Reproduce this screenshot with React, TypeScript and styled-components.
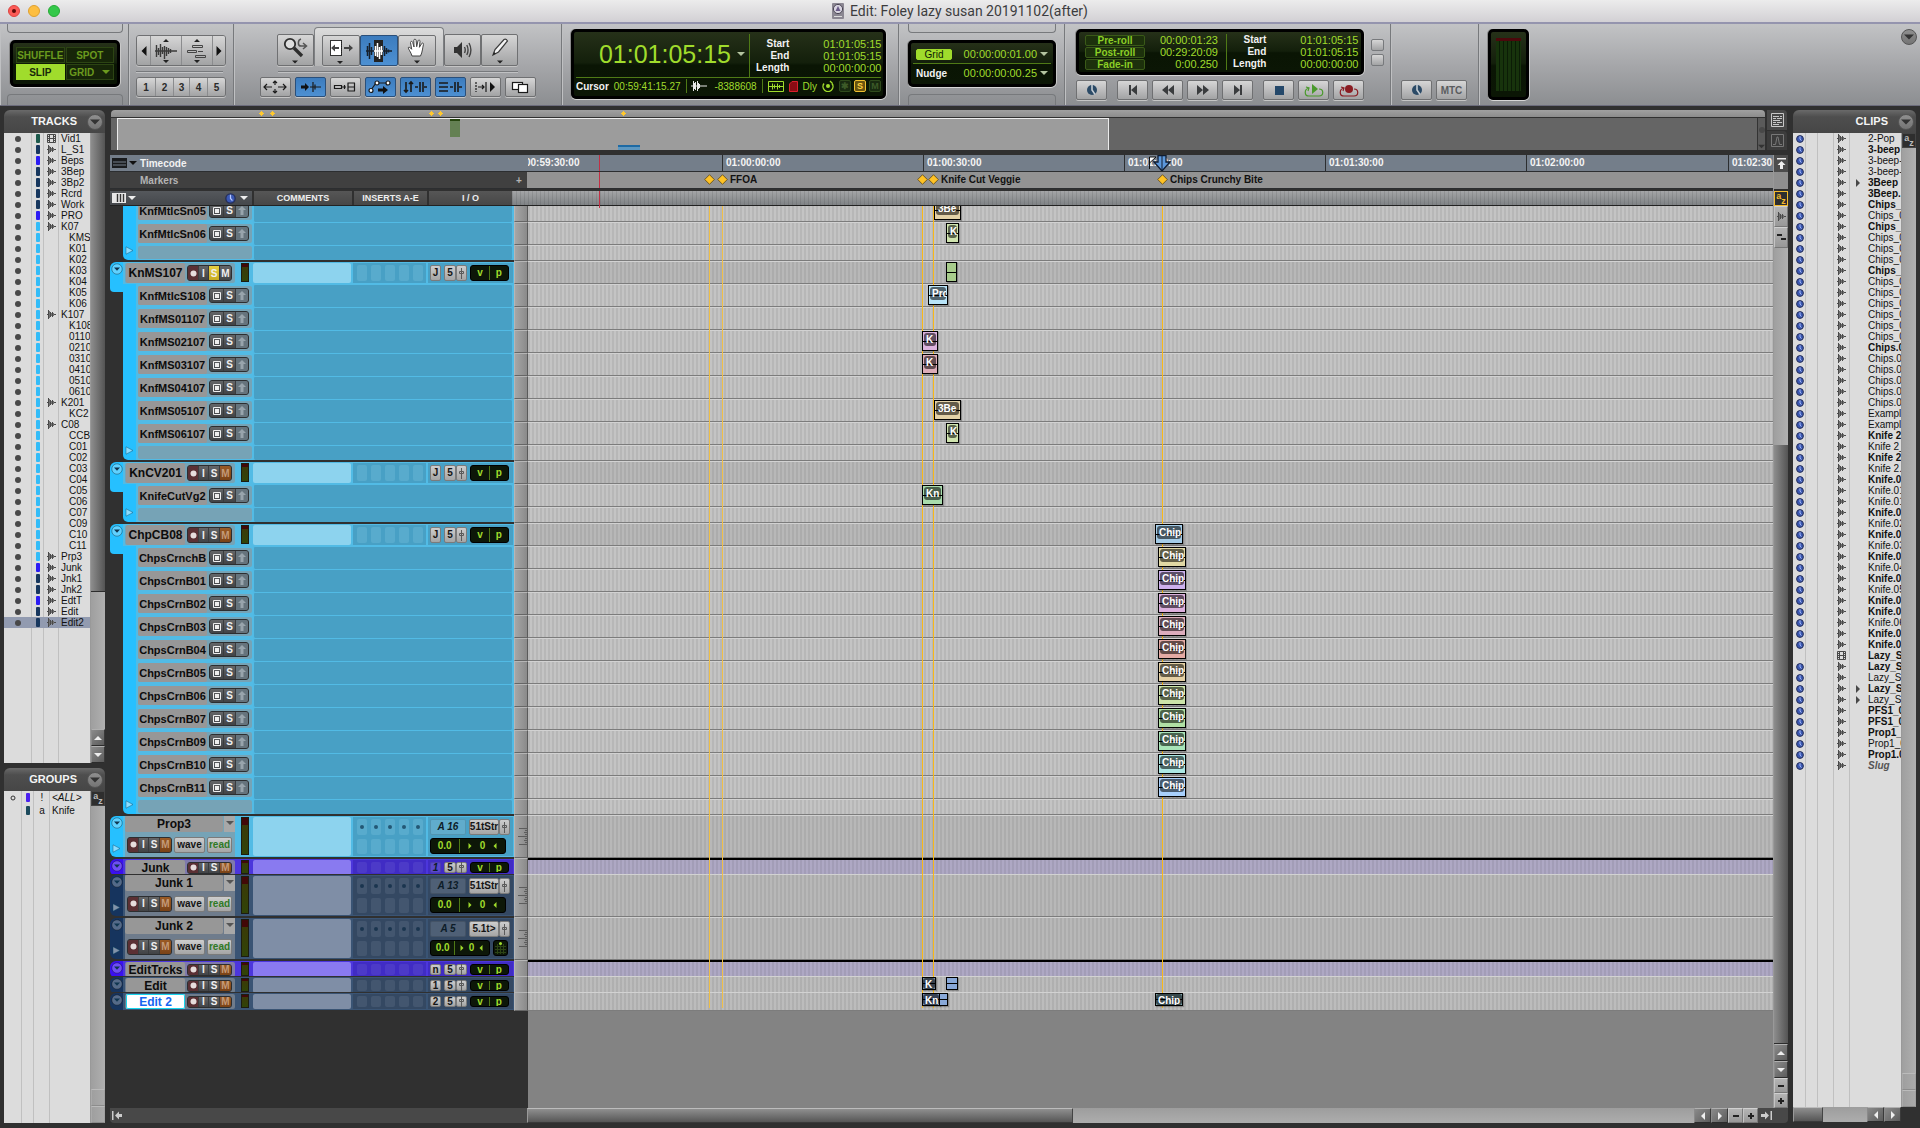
import React from "react";
import styled, { createGlobalStyle, css } from "styled-components";

const SANS = `"Liberation Sans", Arial, Helvetica, sans-serif`;
const LIME = "#a0dc2c";

const GlobalStyle = createGlobalStyle`
  *, *::before, *::after { box-sizing: border-box; }
  body { margin: 0; background: #303030; font-family: ${SANS}; font-size: 10px; line-height: 11px; color: #111; }
  button, input { font: inherit; color: inherit; margin: 0; padding: 0; border: 0; background: none; min-width: 0; }
  button { display: flex; align-items: center; justify-content: center; cursor: pointer; }
  ul { list-style: none; margin: 0; padding: 0; }
  h1, h2 { margin: 0; font: inherit; }
  svg { display: block; flex: none; }
`;

/* ---------- window ---------- */

const Window = styled.div`
  display: flex;
  flex-direction: column;
  min-height: 100vh;
  background: #303030;
`;

const TitleBar = styled.header`
  display: grid;
  grid-template-columns: 1fr auto 1fr;
  align-items: center;
  height: 24px;
  padding: 0 8px;
  background: linear-gradient(#ececec, #d2d0d4);
  border-bottom: 2px solid #9494ae;
`;

const Lights = styled.div`
  display: flex;
  gap: 8px;
`;

const Light = styled.button<{ $c: string; $b: string }>`
  width: 12px;
  height: 12px;
  border-radius: 50%;
  background: ${(p) => p.$c};
  border: 1px solid ${(p) => p.$b};
`;

const Title = styled.h1`
  display: flex;
  align-items: center;
  gap: 6px;
  font-family: Roboto, sans-serif;
  font-size: 14px;
  line-height: 20px;
  color: #3c3c3e;
  white-space: nowrap;
`;

/* ---------- toolbar ---------- */

const Toolbar = styled.div`
  display: flex;
  height: 82px;
  background: linear-gradient(#c2c3c5, #a6a7aa 50%, #8c8e91);
  border-bottom: 1px solid #6c6c7c;
  overflow: hidden;
`;

const Cluster = styled.section<{ $w?: number; $pad?: string; $align?: string; $gap?: number; $spread?: boolean }>`
  display: flex;
  flex-direction: column;
  flex: ${(p) => (p.$w ? `0 0 ${p.$w}px` : "1 1 0")};
  padding: ${(p) => p.$pad ?? "0"};
  align-items: ${(p) => p.$align ?? "flex-start"};
  justify-content: ${(p) => (p.$spread ? "space-between" : "flex-start")};
  gap: ${(p) => p.$gap ?? 5}px;
  border-right: ${(p) => (p.$w ? "1px solid #77797c" : "0")};
  box-shadow: inset 1px 0 #bfc0c2;
`;

const Notch = styled.div<{ $bottom?: boolean }>`
  align-self: stretch;
  height: ${(p) => (p.$bottom ? 11 : 9)}px;
  border: 1px solid #77797c;
  ${(p) =>
    p.$bottom
      ? css`border-bottom: 0; border-radius: 4px 4px 0 0;`
      : css`border-top: 0; border-radius: 0 0 4px 4px;`}
`;

const Screen = styled.div<{ $w: number; $h: number }>`
  display: flex;
  flex-direction: column;
  width: ${(p) => p.$w}px;
  height: ${(p) => p.$h}px;
  padding: 2px;
  border: 3px solid #000;
  border-radius: 5px;
  box-shadow: 0 1px 0 #d6d6d6, 1px 0 0 #c8c8c8, -1px 0 0 #8a8a8a;
  background: linear-gradient(#263119, #131f0b 48%, #0a1504 52%, #0b1605);
  color: ${LIME};
  white-space: nowrap;
`;

const ModeGrid = styled.div`
  display: grid;
  grid-template-columns: 1fr 1fr;
  gap: 1px;
  flex: 1;
  padding: 2px 1px;
`;

const Mode = styled.button<{ $on?: boolean }>`
  gap: 8px;
  font-size: 10px;
  font-weight: 700;
  color: ${(p) => (p.$on ? "#18280a" : "#6b9a1e")};
  background: ${(p) => (p.$on ? LIME : "#172609")};
  border: 1px solid ${(p) => (p.$on ? LIME : "#2c4413")};
`;

const Row = styled.div<{ $gap?: number; $align?: string }>`
  display: flex;
  align-items: ${(p) => p.$align ?? "center"};
  gap: ${(p) => p.$gap ?? 0}px;
`;

const face = css`
  background: linear-gradient(#d6d6d6, #bcbcbd 50%, #a2a3a4);
`;

const Strip = styled.div`
  display: flex;
  border: 1px solid #6f7072;
  border-radius: 3px;
  overflow: hidden;
  box-shadow: 0 1px #c5c5c5;
`;

const Cell = styled.button<{ $w: number; $h: number }>`
  width: ${(p) => p.$w}px;
  height: ${(p) => p.$h}px;
  ${face}
  font-weight: 700;
  color: #2a2a2a;
  & + & { border-left: 1px solid #8b8c8e; }
`;

const Tool = styled.button<{ $w: number; $h: number; $on?: boolean }>`
  width: ${(p) => p.$w}px;
  height: ${(p) => p.$h}px;
  ${face}
  ${(p) => p.$on && css`background: linear-gradient(#3c7cbe, #4d90d2);`}
  border: 1px solid ${(p) => (p.$on ? "#2a4f7a" : "#6f7072")};
  border-radius: 2px;
  box-shadow: 0 1px #c5c5c5;
  font-weight: 700;
  color: #5a5c5e;
`;

const SmartFrame = styled.div`
  display: flex;
  padding: 7px 7px 0;
  border: 1px solid #7d7f82;
  border-bottom: 0;
  border-radius: 4px 4px 0 0;
  background: linear-gradient(#dcdcdc, #b4b5b6);
`;

const Groove = styled.div<{ $w: number }>`
  width: ${(p) => p.$w}px;
  height: 1px;
  background: #77797c;
  box-shadow: 0 1px #c0c1c3;
`;

const CounterTop = styled.div`
  display: grid;
  grid-template-columns: 1fr 132px;
  height: 44px;
  border-bottom: 1px solid #4f7a16;
`;

const MainCounter = styled.div`
  display: flex;
  align-items: center;
  justify-content: flex-end;
  gap: 6px;
  padding-right: 4px;
  margin-bottom: 4px;
  font-size: 25px;
  line-height: 28px;
`;

const Pairs = styled.dl`
  display: grid;
  grid-template-columns: 1fr auto;
  align-content: center;
  column-gap: 34px;
  margin: 0;
  padding: 0 5px 0 6px;
  line-height: 12px;
  border-left: 1px solid #4f7a16;
  dt { font-weight: 700; color: #f2f2f2; text-align: right; }
  dd { margin: 0; font-size: 11px; text-align: right; }
`;

const CursorLine = styled.div`
  display: flex;
  align-items: center;
  gap: 5px;
  flex: 1;
  font-size: 10px;
  b { color: #f2f2f2; }
`;

const Value = styled.span<{ $w: number }>`
  width: ${(p) => p.$w}px;
  text-align: right;
`;

const Bar = styled.i`
  width: 1px;
  height: 14px;
  background: #4f7a16;
`;

const Status = styled.button<{ $on?: boolean }>`
  width: 12px;
  height: 12px;
  border: 1px solid ${(p) => (p.$on ? "#f0c030" : "#2f4a1c")};
  border-radius: 2px;
  background: ${(p) => (p.$on ? "#6a5410" : "#182a10")};
  color: ${(p) => (p.$on ? "#ffd040" : "#3c5a28")};
  font-size: 9px;
  line-height: 10px;
  font-weight: 700;
`;

const GridRow = styled.div`
  display: flex;
  align-items: center;
  gap: 3px;
  flex: 1;
  padding: 0 3px;
  font-size: 11px;
  & + & { border-top: 1px solid #4f7a16; }
  b { font-size: 10px; color: #f2f2f2; flex: 1; }
`;

const Badge = styled.button<{ $w: number; $on?: boolean }>`
  width: ${(p) => p.$w}px;
  height: 11px;
  margin-right: auto;
  font-size: 10px;
  line-height: 9px;
  font-weight: ${(p) => (p.$on ? 400 : 700)};
  border: 1px solid ${(p) => (p.$on ? LIME : "#3a5a18")};
  border-radius: 2px;
  background: ${(p) => (p.$on ? LIME : "#1d310c")};
  color: ${(p) => (p.$on ? "#0c1804" : "#8ccf26")};
`;

const RollGrid = styled.div`
  display: grid;
  grid-template-columns: 141px 1fr;
  flex: 1;
  padding-left: 4px;
`;

const Rolls = styled.div`
  display: flex;
  flex-direction: column;
  justify-content: center;
  gap: 1px;
  padding-right: 8px;
  font-size: 11px;
`;

const Minis = styled.div`
  display: flex;
  flex-direction: column;
  gap: 3px;
`;

const Mini = styled.button`
  width: 13px;
  height: 12px;
  ${face}
  border: 1px solid #77797c;
  border-radius: 2px;
`;

const MeterFill = styled.div`
  flex: 1;
  margin: 4px 3px;
  border-top: 3px solid #4c080c;
  background: repeating-linear-gradient(90deg, #17330c 0 3px, #0b1c06 3px 4px);
`;

const TopRow = styled.div`
  display: flex;
  align-items: flex-start;
  justify-content: space-between;
  align-self: stretch;
`;

const RoundButton = styled.button`
  width: 16px;
  height: 16px;
  flex: none;
  border: 1px solid #555;
  border-radius: 50%;
  background: linear-gradient(#8f8f8f, #747474);
`;

/* ---------- body ---------- */

const Body = styled.main`
  flex: 1;
  display: grid;
  grid-template-columns: 101px minmax(0, 1fr) 123px;
  gap: 5px;
  padding: 4px 4px 5px;
`;

const Side = styled.aside`
  display: flex;
  flex-direction: column;
  gap: 5px;
  min-width: 0;
`;

const Panel = styled.section<{ $grow?: number; $basis?: number }>`
  display: flex;
  flex-direction: column;
  flex: ${(p) => p.$grow ?? 1} 1 ${(p) => p.$basis ?? 0}px;
  min-height: 0;
`;

const PanelHead = styled.div`
  display: flex;
  align-items: center;
  justify-content: flex-end;
  gap: 10px;
  height: 23px;
  padding-right: 2px;
  border-radius: 6px 6px 0 0;
  background: linear-gradient(#6a6a6a, #4e4e4e 30%, #464646);
  h2 { flex: 1; text-align: right; font-size: 11px; font-weight: 700; color: #f4f4f4; }
`;

const PanelBody = styled.div`
  display: grid;
  grid-template-columns: minmax(0, 1fr) 15px;
  flex: 1;
  min-height: 0;
`;

const rules = (xs: number[]) =>
  xs.map((x) => `linear-gradient(#c0c0c0, #c0c0c0) ${x}px 0 / 1px 100% no-repeat`).join(", ");

const List = styled.ul<{ $rules: number[] }>`
  min-width: 0;
  overflow: hidden;
  background: ${(p) => rules(p.$rules)}, #dcdcdc;
`;

const TrackItem = styled.li<{ $sel?: boolean }>`
  display: grid;
  grid-template-columns: 28px 12px 15px 1fr;
  align-items: center;
  justify-items: center;
  height: 11px;
  background: ${(p) => (p.$sel ? "#929bb0" : "none")};
`;

const Dot = styled.i`
  width: 6px;
  height: 6px;
  border-radius: 50%;
  background: #484848;
`;

const Pill = styled.i<{ $c: string }>`
  width: 4px;
  height: 9px;
  border-radius: 1px;
  background: ${(p) => p.$c};
`;

const ItemName = styled.span<{ $indent?: boolean; $bold?: boolean; $italic?: boolean }>`
  justify-self: start;
  width: 100%;
  overflow: hidden;
  white-space: nowrap;
  padding-left: ${(p) => (p.$indent ? 10 : 2)}px;
  font-weight: ${(p) => (p.$bold ? 700 : 400)};
  font-style: ${(p) => (p.$italic ? "italic" : "normal")};
  color: ${(p) => (p.$italic && p.$bold ? "#555" : "#111")};
`;

const GroupItem = styled.li`
  display: grid;
  grid-template-columns: 18px 12px 16px 1fr;
  align-items: center;
  justify-items: center;
  height: 13px;
`;

const ClipItem = styled.li`
  display: grid;
  grid-template-columns: 13px 27px 16px 17px 1fr;
  align-items: center;
  justify-items: center;
  height: 11px;
`;

const VTrack = styled.div`
  display: flex;
  flex-direction: column;
  border-left: 1px solid #999;
  background: linear-gradient(90deg, #9f9f9f, #b0b0b0);
`;

const VSpace = styled.div<{ $grow: number }>`
  flex: ${(p) => p.$grow} 0 0;
`;

const VThumb = styled.div<{ $grow: number }>`
  flex: ${(p) => p.$grow} 0 0;
  background: linear-gradient(90deg, #8d8d8d, #545454);
  border-bottom: 1px solid #2c2c2c;
`;

const ScrollBtn = styled.button<{ $w: number; $h: number; $tone?: "light" | "off" }>`
  width: ${(p) => p.$w}px;
  height: ${(p) => p.$h}px;
  flex: none;
  color: #eee;
  border: 1px solid;
  border-color: #b0b0b0 #3a3a3a #2c2c2c #8a8a8a;
  background: linear-gradient(135deg, #8a8a8a, #5c5c5c);
  ${(p) => p.$tone === "light" && css`background: linear-gradient(#b4b4b4, #989898); color: #222; border-color: #d0d0d0 #7a7a7a #777 #c4c4c4;`}
  ${(p) => p.$tone === "off" && css`background: linear-gradient(90deg, #9f9f9f, #aaa); border-color: #bbb #a0a0a0 #8c8c8c #aaa;`}
`;

const HBar = styled.div`
  display: flex;
  height: 15px;
  min-width: 0;
  background: linear-gradient(#9d9d9d, #adadad);
`;

const HThumb = styled.div<{ $grow: number }>`
  flex: ${(p) => p.$grow} 0 0;
  border: 1px solid;
  border-color: #bcbcbc #444 #3a3a3a #999;
  background: linear-gradient(#8f8f8f, #565656);
`;

const SortBtn = styled.button<{ $hot?: boolean }>`
  width: 14px;
  height: 15px;
  flex: none;
  background: #2e2e2e;
  border: 1px solid ${(p) => (p.$hot ? "#f5bb2c" : "#444")};
  color: ${(p) => (p.$hot ? "#f5bb2c" : "#bbb")};
  font-size: 9px;
  line-height: 8px;
  font-weight: 700;
  align-items: stretch;
  span + span { align-self: flex-end; }
`;

/* ---------- edit window centre ---------- */

const Center = styled.div`
  display: flex;
  flex-direction: column;
  min-width: 0;
`;

const Universe = styled.div`
  display: grid;
  grid-template-columns: minmax(0, 1fr) 20px;
  column-gap: 2px;
  height: 40px;
  margin-bottom: 5px;
  padding: 0 1px;
`;

const UniverseView = styled.div`
  display: flex;
  flex-direction: column;
  min-width: 0;
`;

const MarkerStrip = styled.div`
  position: relative;
  height: 7px;
  margin-bottom: 1px;
  border-radius: 4px 4px 0 0;
  background: linear-gradient(#a0a0a0, #8c8c8c);
`;

const MiniMark = styled.i<{ $x: number }>`
  position: absolute;
  left: ${(p) => p.$x}px;
  top: 1px;
  width: 5px;
  height: 5px;
  background: linear-gradient(#ffc82e, #ffc82e) 1px 1px / 3px 3px no-repeat,
    linear-gradient(#ffc82e, #ffc82e) 2px 0 / 1px 5px no-repeat,
    linear-gradient(#ffc82e, #ffc82e) 0 2px / 5px 1px no-repeat;
`;

const UniverseMap = styled.div`
  position: relative;
  display: flex;
  flex: 1;
  background: #656565;
`;

const VisibleArea = styled.div`
  flex: 0 0 60%;
  margin-left: 6px;
  border: 1px solid #ececec;
  border-bottom: 0;
  background: #9c9c9c;
`;

const MiniClip = styled.i<{ $x: number; $y: number; $w: number; $h: number; $c: string; $t: string }>`
  position: absolute;
  left: ${(p) => p.$x}px;
  top: ${(p) => p.$y}px;
  width: ${(p) => p.$w}px;
  height: ${(p) => p.$h}px;
  background: ${(p) => p.$c};
  border-top: 2px solid ${(p) => p.$t};
`;

const MapScroll = styled.div`
  display: flex;
  flex-direction: column;
  align-items: center;
  justify-content: space-between;
  width: 8px;
  margin-left: auto;
  padding-top: 9px;
  border-left: 1px solid #333;
  background: #5a5a5a;
`;

const TabCol = styled.div`
  display: flex;
  flex-direction: column;
  gap: 1px;
`;

const Tab = styled.button<{ $on?: boolean }>`
  flex: 1;
  background: ${(p) => (p.$on ? "#484848" : "#3c3c3c")};
  border-radius: 0 4px 0 0;
`;

const Editor = styled.div`
  display: grid;
  grid-template-columns: minmax(0, 1fr) 15px;
  flex: 1;
  min-height: 0;
`;

const EditMain = styled.div`
  display: flex;
  flex-direction: column;
  min-width: 0;
`;

const HEAD = 418;

const Ruler = styled.div<{ $kind: "time" | "marker" }>`
  display: grid;
  grid-template-columns: ${HEAD}px minmax(0, 1fr);
  height: 17px;
  border-bottom: 1px solid #2c2e30;
  background: ${(p) =>
    p.$kind === "time" ? "#747e8a" : `linear-gradient(90deg, #404040 ${HEAD - 1}px, #939393 ${HEAD - 1}px)`};
  font-weight: 700;
`;

const RulerName = styled.div<{ $dim?: boolean }>`
  display: grid;
  grid-template-columns: 28px 1fr 10px;
  align-items: center;
  padding: 0 2px;
  color: ${(p) => (p.$dim ? "#b4b4b4" : "#f2f2f2")};
`;

const RulerLane = styled.div`
  position: relative;
  overflow: hidden;
`;

const Tick = styled.span<{ $x: number }>`
  position: absolute;
  top: 0;
  bottom: 0;
  left: ${(p) => p.$x}px;
  padding-left: 3px;
  line-height: 16px;
  border-left: 1px solid #2c2e30;
  color: #f4f4f4;
`;

const MarkerFlag = styled.span<{ $x: number }>`
  position: absolute;
  left: ${(p) => p.$x}px;
  top: 2px;
  display: flex;
  align-items: center;
  gap: 2px;
  color: #111;
  white-space: nowrap;
`;

const Playhead = styled.div<{ $x: number }>`
  position: absolute;
  left: ${(p) => p.$x}px;
  top: 0;
`;

const CursorMark = styled.i`
  position: absolute;
  z-index: 2;
  left: 71px;
  top: 0;
  width: 1px;
  height: 17px;
  background: #c22f44;
`;

const ColumnHeads = styled.div`
  display: grid;
  grid-template-columns: 142px 98px 73px 83px 14px minmax(0, 1fr);
  column-gap: 2px;
  height: 17px;
  padding-top: 2px;
  border-bottom: 1px solid #222;
`;

const Head = styled.div`
  display: flex;
  align-items: center;
  justify-content: center;
  background: linear-gradient(#565656, #474747);
  color: #eee;
  font-size: 9px;
  font-weight: 700;
`;

const HeadTools = styled(Head)`
  justify-content: space-between;
  padding: 0 4px 0 2px;
  background: linear-gradient(#55585c, #45484c);
`;

const HeadLane = styled.div`
  position: relative;
  margin-left: -2px;
  background: repeating-linear-gradient(90deg, #00000018 0 1px, #0000 1px 4px), linear-gradient(#a4a5a7, #7f8285);
`;

const Tracks = styled.div`
  position: relative;
  flex: 1;
  overflow: hidden;
  background: linear-gradient(90deg, #303030 ${HEAD}px, #838383 ${HEAD}px);
`;

const TrackStack = styled.div`
  position: relative;
  margin-top: -7px;
`;

const MarkerLine = styled.i<{ $x: number; $strong?: boolean }>`
  position: absolute;
  top: 0;
  bottom: 0;
  left: ${(p) => HEAD + p.$x}px;
  width: 1px;
  background: ${(p) => (p.$strong ? "#f8b818" : "#efbf48")};
`;

type Theme = { tab: string; bg: string; cell: string; comment: string; panel: string; slot: string };
const BLUE: Theme = { tab: "#26c0ff", bg: "#52bbe5", cell: "#48a0c5", comment: "#8dd3ee", panel: "#76a3b6", slot: "#58abcd" };
const VIOLET: Theme = { tab: "#3a10f0", bg: "#4c36dc", cell: "#402cc4", comment: "#897af0", panel: "#7f79ac", slot: "#4c3ac8" };
const NAVY: Theme = { tab: "#16345e", bg: "#3a5474", cell: "#344862", comment: "#7f8ea6", panel: "#6f7c8c", slot: "#43566f" };

const TrackRow = styled.div<{ $h: number }>`
  display: grid;
  grid-template-columns: 404px 14px minmax(0, 1fr);
  height: ${(p) => p.$h}px;
`;

const Controls = styled.div<{ $pad: string }>`
  display: grid;
  grid-template-columns: 13px minmax(0, 1fr);
  padding: ${(p) => p.$pad};
  background: #303030;
`;

const EdgeTab = styled.div<{ $c?: string; $r?: string; $h?: string }>`
  display: flex;
  flex-direction: column;
  align-items: center;
  justify-content: space-between;
  height: ${(p) => p.$h ?? "auto"};
  padding: 1px 0 4px;
  border-radius: ${(p) => p.$r ?? "0"};
  background: ${(p) => p.$c ?? "none"};
`;

const Columns = styled.div<{ $c: string; $child?: boolean }>`
  display: grid;
  grid-template-columns: ${(p) => (p.$child ? "13px 117px minmax(0, 1fr)" : "112px 18px 100px 75px minmax(0, 1fr)")};
  background: ${(p) => (p.$child ? `linear-gradient(90deg, #303030 13px, ${p.$c} 13px)` : p.$c)};
  min-height: 0;
  padding-right: 1px;
`;

const Indent = styled.div<{ $c: string; $last?: boolean }>`
  display: flex;
  align-items: flex-start;
  justify-content: center;
  padding-top: 1px;
  background: ${(p) => p.$c};
  border-radius: ${(p) => (p.$last ? "0 0 0 5px" : "0")};
`;

const ChildPanel = styled.div<{ $c: string; $thin?: boolean }>`
  display: flex;
  align-items: center;
  justify-content: space-between;
  margin: ${(p) => (p.$thin ? "1px 1px 1px 2px" : "2px 1px 2px 2px")};
  padding-right: 3px;
  border-radius: 2px;
  background: ${(p) => p.$c};
`;

const Plain = styled.div<{ $c: string; $edge: string }>`
  background: ${(p) => p.$c};
  border: 1px solid ${(p) => p.$edge};
  border-bottom: 0;
  border-radius: 2px;
`;

const TrackName = styled.span<{ $size?: number; $edit?: boolean; $w?: number }>`
  flex: ${(p) => (p.$w ? `0 0 ${p.$w}px` : "1")};
  align-self: stretch;
  display: flex;
  align-items: center;
  justify-content: center;
  overflow: hidden;
  white-space: nowrap;
  border-radius: 2px;
  font-weight: 700;
  font-size: ${(p) => p.$size ?? 11}px;
  line-height: 12px;
  background: ${(p) => (p.$edit ? "#fff" : "#979797")};
  color: ${(p) => (p.$edit ? "#1465f0" : "#0c0c0c")};
  box-shadow: ${(p) => (p.$edit ? "inset 0 0 0 1px #19d6ee" : "none")};
`;

const KeyStrip = styled.div<{ $h: number }>`
  display: flex;
  flex: none;
  height: ${(p) => p.$h}px;
  border: 1px solid #2c2e30;
  border-radius: 3px;
  overflow: hidden;
  background: #4b4d50;
`;

const Key = styled.button<{ $w: number; $kind?: "rec" | "solo" | "mute" | "off" }>`
  width: ${(p) => p.$w}px;
  color: #f0f0f0;
  font-size: 10px;
  font-weight: 700;
  background: linear-gradient(#646668, #414346);
  ${(p) => p.$kind === "rec" && css`background: #5b3034;`}
  ${(p) => p.$kind === "solo" && css`background: linear-gradient(#e6cf40, #c8ac20);`}
  ${(p) => p.$kind === "mute" && css`background: linear-gradient(#9a5a24, #7a4216); color: #c49a78;`}
  ${(p) => p.$kind === "off" && css`background: #66747d; color: #9fabb2;`}
  & + & { border-left: 1px solid #3a3c3e; }
`;

const ParentName = styled.div<{ $c: string }>`
  display: flex;
  align-items: center;
  gap: 2px;
  margin: 1px 0 1px 2px;
  padding: 0 3px 0 1px;
  border-radius: 2px;
  background: ${(p) => p.$c};
`;

const TallName = styled.div<{ $c: string }>`
  display: flex;
  flex-direction: column;
  margin: 0 0 0 2px;
  background: ${(p) => p.$c};
`;

const NameRow = styled.div`
  display: flex;
  gap: 1px;
  height: 16px;
`;

const DropBtn = styled.button`
  width: 11px;
  background: #a8a8a8;
  align-items: flex-start;
  padding-top: 3px;
`;

const KeyRow = styled.div`
  display: flex;
  align-items: center;
  gap: 2px;
  flex: 1;
  padding: 0 2px;
`;

const Soft = styled.button<{ $w: number; $h: number; $green?: boolean; $flat?: boolean }>`
  width: ${(p) => p.$w}px;
  height: ${(p) => p.$h}px;
  flex: none;
  border: 1px solid #7b7b7b;
  border-radius: 2px;
  background: linear-gradient(#cdcdcd, #a5a5a5);
  font-size: 10px;
  font-weight: 700;
  line-height: 10px;
  color: ${(p) => (p.$green ? "#2e7a26" : "#151515")};
  ${(p) => p.$flat && css`background: #ffffff22; border-color: #00000022; font-style: italic; color: #0d1c28;`}
`;

const MeterCol = styled.div`
  display: flex;
  justify-content: center;
  padding: 1px 3px 2px 4px;
`;

const Meter = styled.div`
  width: 8px;
  border: 1px solid #1c1c10;
  background: linear-gradient(#420808 20%, #3a3a08 20%, #304408);
`;

const Comment = styled.input<{ $c: string }>`
  width: 98px;
  margin: 1px 0;
  height: calc(100% - 2px);
  border-radius: 2px;
  background: ${(p) => p.$c};
`;

const Inserts = styled.div<{ $c: string; $rows: number }>`
  display: grid;
  grid-template-columns: repeat(5, 10px);
  grid-template-rows: repeat(${(p) => p.$rows}, 1fr);
  justify-content: center;
  gap: 4px;
  margin: 1px 2px 1px 0;
  padding: 2px 0;
  background: ${(p) => p.$c};
`;

const Slot = styled.button<{ $c: string }>`
  border-radius: 2px;
  background: ${(p) => p.$c};
`;

const IO = styled.div<{ $c: string }>`
  display: flex;
  flex-direction: column;
  justify-content: center;
  gap: 3px;
  min-width: 0;
  margin: 1px 0;
  padding-left: 2px;
  background: ${(p) => p.$c};
`;

const IORow = styled.div`
  display: flex;
  align-items: center;
  gap: 3px;
`;

const Pair = styled.div`
  display: flex;
`;

const Vp = styled.div<{ $w: number; $h: number; $gap?: number }>`
  display: flex;
  align-items: center;
  justify-content: center;
  gap: ${(p) => p.$gap ?? 6}px;
  width: ${(p) => p.$w}px;
  height: ${(p) => p.$h}px;
  border: 1px solid #000;
  border-radius: 3px;
  background: #0d1708;
  color: ${LIME};
  font-weight: 700;
  line-height: 10px;
  overflow: hidden;
  white-space: nowrap;
`;

const Gutter = styled.div`
  display: flex;
  align-items: center;
  justify-content: flex-end;
  background: linear-gradient(90deg, #a6a6a6, #8a8a8a);
  border: 1px solid;
  border-color: #b6b6b6 #5a5a5a #666 #b6b6b6;
`;

const Lane = styled.div<{ $c: string; $cap?: boolean }>`
  position: relative;
  background: repeating-linear-gradient(90deg, #00000011 0 2px, #0000 2px 4px), ${(p) => p.$c};
  border-top: ${(p) => (p.$cap ? "2px solid #000" : "1px solid #d2d2d2")};
  border-bottom: 1px solid #7c7c7c;
`;

const ClipBox = styled.div<{ $x: number; $w: number; $c: string; $short?: boolean }>`
  position: absolute;
  z-index: 1;
  left: ${(p) => p.$x}px;
  top: 0;
  width: ${(p) => p.$w}px;
  height: ${(p) => (p.$short ? 13 : 20)}px;
  padding: ${(p) => (p.$short ? "0" : "1px")};
  border: 1px solid #000;
  background: linear-gradient(#000, #000) 0 50% / 100% 1px no-repeat, ${(p) => p.$c};
  box-shadow: 1px 1px 1px #00000040;
`;

const ClipLabel = styled.span`
  display: block;
  height: 13px;
  max-height: 100%;
  padding-left: 2px;
  overflow: hidden;
  white-space: nowrap;
  border-radius: 3px;
  background: #00000090;
  color: #fff;
  font-weight: 700;
  line-height: 13px;
`;

const BottomBar = styled.div`
  display: grid;
  grid-template-columns: 417px minmax(0, 1fr) auto;
  height: 15px;
  background: #484848;
  border-radius: 0 0 4px 4px;
`;

const BottomCell = styled.div`
  display: flex;
  align-items: center;
  padding-left: 2px;
`;

const EndCell = styled.div`
  display: flex;
  align-items: center;
  width: 30px;
  padding-left: 3px;
`;

const PinBtn = styled.button`
  height: 17px;
  flex: none;
  background: #4c4c4c;
`;

const Blank = styled.div`
  height: 19px;
  flex: none;
  background: #8f8f8f;
  border-bottom: 2px solid #303030;
`;

const ClipsFoot = styled.div`
  display: flex;
  height: 16px;
  padding-right: 15px;
`;

const FootBar = styled(HBar)`
  flex: 1;
`;

/* ---------- icons ---------- */

const Tri = ({ d, c = "currentColor", s = 7 }: { d: "up" | "down" | "left" | "right"; c?: string; s?: number }) => {
  const p = { up: "M0 6 4 2 8 6Z", down: "M0 2 4 6 8 2Z", left: "M6 0 2 4 6 8Z", right: "M2 0 6 4 2 8Z" }[d];
  return <svg width={s} height={s} viewBox="0 0 8 8"><path d={p} fill={c} /></svg>;
};

const WaveIcon = () => (
  <svg width="9" height="9" viewBox="0 0 9 9" fill="none">
    <path d="M0 4.5H9M1.5 0V9M3.5 2V7M5.5 2V7" stroke="#4a4a4a" />
    <path d="M2.5 1V8M4.5 3V6M6.500 3V6" stroke="#707070" />
  </svg>
);

const FilmIcon = () => (
  <svg width="9" height="9" viewBox="0 0 9 9" fill="none" stroke="#484848">
    <path d="M.5 .5H8.5V8.5H.5ZM2.5 0V9M6.5 0V9M2.5 4.5H6.5M0 2.5H2M0 4.5H2M0 6.5H2M7 2.5H9M7 4.5H9M7 6.5H9" />
  </svg>
);

const ClockIcon = ({ s = 8 }: { s?: number }) => (
  <svg width={s} height={s} viewBox="0 0 8 8">
    <circle cx="4" cy="4" r="3.4" fill="#3a58b4" stroke="#262f58" strokeWidth="1" />
    <path d="M4 1.2V4L5.4 5.6" stroke="#b8c8ff" fill="none" strokeWidth=".9" />
  </svg>
);

const Pie = () => (
  <svg width="12" height="12" viewBox="0 0 12 12">
    <circle cx="6" cy="6" r="5" fill="#2b4a66" />
    <path d="M6 .5V6L9 10.4" stroke="#c4ccd4" strokeWidth="1.6" fill="none" />
  </svg>
);

const Fader = () => (
  <svg width="7" height="11" viewBox="0 0 7 11" fill="none" stroke="#5a5a5a"><path d="M3.5 0V11M1.5 3.5H5.5V5.5H1.5Z" /></svg>
);

const Chev = () => (
  <svg width="12" height="12" viewBox="0 0 12 12">
    <circle cx="6" cy="6" r="5.2" fill="#ffffff44" stroke="#00000055" />
    <path d="M3 4.6H9L6 7.8Z" fill="#0f3550" />
  </svg>
);

const PlayTri = () => (
  <svg width="9" height="9" viewBox="0 0 9 9"><path d="M1 .8 8 4.5 1 8.2Z" fill="#ffffff77" stroke="#00406066" /></svg>
);

const Diamond = () => (
  <svg width="11" height="11" viewBox="0 0 11 11"><path d="M5.5 .7 10.3 5.5 5.5 10.3 .7 5.5Z" fill="#ffc225" stroke="#5c4510" strokeWidth=".8" /></svg>
);

const Magnifier = () => (
  <svg width="28" height="28" viewBox="0 0 28 28" fill="none">
    <circle cx="8" cy="8" r="5.2" fill="#dedede" stroke="#2e2e2e" strokeWidth="1.8" />
    <path d="M12 12 20 20" stroke="#2e2e2e" strokeWidth="3.4" />
    <path d="M19 3C15.500 4 15.500 10 19 10H24M21 7 24.500 10 21 13" stroke="#555" strokeWidth="1.5" />
    <path d="M10 24.500H16L13 27.500Z" fill="#222" />
  </svg>
);

const Trim = () => (
  <svg width="26" height="28" viewBox="0 0 26 28">
    <rect x="2.500" y="3.500" width="11" height="15" fill="#fff" stroke="#333" />
    <path d="M13.500 3V19" stroke="#222" strokeDasharray="1 1" />
    <path d="M3 11 7 7.500V10H11V12H7V14.500ZM25 11 21 7.500V10H16V12H21V14.500Z" fill="#444" />
    <path d="M9 24H15L12 27Z" fill="#222" />
  </svg>
);

const Selector = () => (
  <svg width="28" height="24" viewBox="0 0 28 24">
    <rect x="9" y="1" width="9" height="22" fill="#232323" />
    <path d="M1 12H27M2.500 7V17M4.500 4V20M6.500 8V16M19.500 7V17M21.500 9V15M23.500 10.500V13.500" stroke="#16202c" strokeWidth="1.500" />
    <path d="M10.500 7V17M12.500 4V18M14.500 8V20M16.500 7V16M9 12H18" stroke="#fff" strokeWidth="1.500" />
  </svg>
);

const Hand = () => (
  <svg width="22" height="27" viewBox="0 0 22 27">
    <path d="M6 19C5 15 2 12 2.300 10.500C3 9.600 4.600 10.800 5.700 12.300L4.500 5.500C4.600 4 6.300 4 6.700 5.400L8 10L7.800 3.300C8 1.800 9.900 1.800 10.100 3.300L10.700 9.700L12 3.800C12.500 2.500 14.200 2.900 14 4.400L13.400 10.300L15.700 6.500C16.600 5.500 17.900 6.200 17.400 7.700C16.600 10.600 16.500 15 14.500 19Z" fill="#fff" stroke="#444" strokeWidth="1" />
    <path d="M8 23.500H14L11 26.500Z" fill="#222" />
  </svg>
);

const Speaker = () => (
  <svg width="20" height="22" viewBox="0 0 20 22" fill="none">
    <path d="M1 8H4L9 3V19L4 14H1Z" fill="#333" />
    <path d="M11.500 8Q13 11 11.500 14M13.800 6Q16.300 11 13.800 16M16 4Q19.800 11 16 18" stroke="#444" strokeWidth="1.400" />
  </svg>
);

const Pencil = () => (
  <svg width="20" height="27" viewBox="0 0 20 27">
    <path d="M3 18 5 12.500 14 2.500Q16 1.500 17.500 4L8.500 15Z" fill="#f4f4f4" stroke="#3a3a3a" strokeWidth="1.200" />
    <path d="M3 18 4 15 6 16.500Z" fill="#222" />
    <path d="M7 23.500H13L10 26.500Z" fill="#222" />
  </svg>
);

const WaveZoom = () => (
  <svg width="24" height="26" viewBox="0 0 24 26">
    <path d="M9 4 12 1 15 4ZM9 22 12 25 15 22Z" fill="#222" />
    <path d="M1 13H23M2.500 7V19M4.500 10V17M6.500 6V19M8.500 9V16M10.500 8V21M12.500 9V18M14.500 10V16M16.500 11V15" stroke="#3a3a3a" strokeWidth="1.400" />
  </svg>
);

const MidiZoom = () => (
  <svg width="24" height="26" viewBox="0 0 24 26" fill="none" stroke="#444">
    <path d="M9 4 12 1 15 4ZM9 22 12 25 15 22Z" fill="#222" stroke="none" />
    <path d="M7.500 7.500H17.500V9.500H7.500ZM2.500 12.500H11.500V14.500H2.500ZM10.500 17.500H20.500V19.500H10.500ZM13 13.500H18" />
  </svg>
);

const EditIcon = ({ k }: { k: number }) => {
  const shapes = [
    <path key="0" d="M2 8H10M16 8H24M5 5 2 8 5 11M21 5 24 8 21 11M13 2V6M13 10V14M11 4 13 2 15 4M11 12 13 14 15 12" fill="none" />,
    <g key="1"><path d="M4 6.500H8V4L12 8 8 12V9.500H4Z" fill="#111" stroke="none" /><path d="M13 8H24M16 3V13M18 5.500V10.500" /></g>,
    <path key="2" d="M2.500 6.500H9.500V9.500H2.500ZM10 8H14M12.500 6V10M15.500 4H23M15.500 8H23M15.500 12H23M16 4V12M22.500 4V12" fill="none" />,
    <g key="3"><path d="M4 11 9 4 20 4" fill="none" /><g fill="#fff"><circle cx="4" cy="11.500" r="2" /><circle cx="10" cy="4" r="2" /><circle cx="21" cy="4" r="2" /></g><path d="M11 9.500H16V7L21 11 16 15V12.500H11Z" fill="#111" stroke="none" /></g>,
    <path key="4" d="M4 3V13M2 11 4 13 6 11M9 3V13M7 5 9 3 11 5M13 8H16M18 3V13M21 3V13M22 8H25" fill="none" strokeWidth="1.600" />,
    <path key="5" d="M2 4H11M2 8H11M2 12H11M13 8H16M18 3V13M21 3V13M22 8H25" fill="none" strokeWidth="1.600" />,
    <g key="6"><path d="M4 3V13" strokeDasharray="2 1" /><path d="M6 8H12M10 6 12 8 10 10M14 3V13" fill="none" /><path d="M18 3 23 8 18 13Z" fill="#111" stroke="none" /></g>,
    <g key="7" fill="#fff"><rect x="5.500" y="3.500" width="10" height="7" /><rect x="11.500" y="5.500" width="9" height="8" /></g>,
  ];
  return <svg width="26" height="16" viewBox="0 0 26 16" stroke="#1a1a1a" strokeWidth="1.200">{shapes[k]}</svg>;
};

const TransportIcon = ({ k }: { k: string }) => (
  <svg width="22" height="16" viewBox="0 0 22 16" fill="#3a3c3e">
    {k === "start" && <path d="M7 3H9V13H7ZM15 3V13L9 8Z" />}
    {k === "rew" && <path d="M11 3V13L5 8ZM17 3V13L11 8Z" />}
    {k === "fwd" && <path d="M5 3V13L11 8ZM11 3V13L17 8Z" />}
    {k === "end" && <path d="M7 3V13L13 8ZM13 3H15V13H13Z" />}
    {k === "stop" && <rect x="7" y="4" width="9" height="9" fill="#24486a" />}
    {k === "play" && (
      <>
        <path d="M9 2 15 7 9 12Z" fill="#4a9a2c" />
        <path d="M6 6C1 7 1 14 6 14H16C21 14 21 7 16 7M3 5 6 6 5 9" fill="none" stroke="#4a9a2c" strokeWidth="1.200" />
      </>
    )}
    {k === "rec" && (
      <>
        <circle cx="11" cy="7" r="4" fill="#8a1c22" />
        <path d="M6 6C1 7 1 14 6 14H16C21 14 21 7 16 7M3 5 6 6 5 9" fill="none" stroke="#8a1c22" strokeWidth="1.200" />
      </>
    )}
  </svg>
);

const Scale = () => (
  <svg width="10" height="20" viewBox="0 0 10 20" stroke="#5c5c5c"><path d="M2 1.500H10M7 5.500H10M1 9.500H10M7 13.500H10M2 17.500H10M8 3.500H10M8 7.500H10M8 11.500H10M8 15.500H10" /></svg>
);

const Sign = ({ plus }: { plus?: boolean }) => (
  <svg width="8" height="8" viewBox="0 0 8 8" stroke="#222" strokeWidth="2"><path d={plus ? "M1 4H7M4 1V7" : "M1 4H7"} /></svg>
);

/* ---------- data ---------- */

type ListTrack = [string, "n" | "v" | "b" | "f", boolean?];
const range = (names: string): ListTrack[] => names.split(" ").map((n) => [n, "b", true]);
const trackList: ListTrack[] = [
  ["Vid1", "f"], ["L_S1", "n"], ["Beps", "v"], ["3Bep", "n"], ["3Bp2", "n"], ["Rcrd", "n"], ["Work", "n"], ["PRO", "v"],
  ["K07", "b"], ...range("KMS K01 K02 K03 K04 K05 K06"),
  ["K107", "b"], ...range("K108 0110 0210 0310 0410 0510 0610"),
  ["K201", "b"], ...range("KC2"),
  ["C08", "b"], ...range("CCB C01 C02 C03 C04 C05 C06 C07 C09 C10 C11"),
  ["Prp3", "b"], ["Junk", "v"], ["Jnk1", "n"], ["Jnk2", "n"], ["EdtT", "v"], ["Edit", "n"], ["Edit2", "n"],
];
const pillColor = { n: "#17375e", v: "#2c1cf4", b: "#33bcf8", f: "#1d5a4c" };

/* "*" marks a whole-file clip, ">" a multichannel clip */
const clipList = [
  "2-Pop", "*3-beep", "3-beep-", "3-beep-", "*>3Beep", "*3Beep.", "*Chips_", "Chips_0", "*Chips_", "Chips_0", "Chips_0",
  "Chips_0", "*Chips_", "Chips_0", "Chips_0", "Chips_0", "Chips_0", "Chips_0", "Chips_0", "*Chips.0", "Chips.0", "Chips.0",
  "Chips.0", "Chips.0", "Chips.0", "Exampl", "Exampl", "*Knife 2", "Knife 2_", "*Knife 2", "Knife 2.", "*Knife.0",
  "Knife.01", "Knife.01", "*Knife.0", "Knife.02", "*Knife.0", "Knife.03", "*Knife.0", "Knife.04", "*Knife.0", "Knife.05",
  "*Knife.0", "*Knife.0", "Knife.06", "*Knife.0", "*Knife.0", "*Lazy_S", "*Lazy_S", "Lazy_S", "*>Lazy_S", ">Lazy_S",
  "*PFS1_0", "*PFS1_0", "*Prop1_", "Prop1_0", "*Prop1.0", "*Slug",
];
const VIDEO_CLIP = 47;

type ClipData = { x: number; w: number; c: string; t?: string };
const c3Be: ClipData = { x: 406, w: 27, c: "#e3d2a8", t: "3Be" };
const cK: ClipData = { x: 418, w: 13, c: "#d0e4ae", t: "K" };
const chip = (c: string): ClipData => ({ x: 630, w: 28, c, t: "Chip" });

type TrackData = {
  kind: "child" | "fill" | "parent" | "tall" | "slim";
  name?: string;
  theme?: Theme;
  clips?: ClipData[];
  first?: boolean;
  solo?: boolean;
  out?: string;
  bus?: string;
  folder?: boolean;
  surround?: boolean;
  edit?: boolean;
};

const tracks: TrackData[] = [
  { kind: "child", name: "KnfMtlcSn05", clips: [c3Be] },
  { kind: "child", name: "KnfMtlcSn06", clips: [cK] },
  { kind: "fill" },
  { kind: "parent", name: "KnMS107", solo: true, clips: [{ x: 418, w: 11, c: "#a8cc8c" }] },
  { kind: "child", name: "KnfMtlcS108", first: true, clips: [{ x: 400, w: 20, c: "#b8e4f8", t: "Pro" }] },
  { kind: "child", name: "KnfMS01107" },
  { kind: "child", name: "KnfMS02107", clips: [{ x: 394, w: 16, c: "#dcb2de", t: "K" }] },
  { kind: "child", name: "KnfMS03107", clips: [{ x: 394, w: 16, c: "#dcacb8", t: "K" }] },
  { kind: "child", name: "KnfMS04107" },
  { kind: "child", name: "KnfMS05107", clips: [c3Be] },
  { kind: "child", name: "KnfMS06107", clips: [cK] },
  { kind: "fill" },
  { kind: "parent", name: "KnCV201" },
  { kind: "child", name: "KnifeCutVg2", first: true, clips: [{ x: 394, w: 21, c: "#a8dcac", t: "Kn" }] },
  { kind: "fill" },
  { kind: "parent", name: "ChpCB08", clips: [{ x: 627, w: 28, c: "#a4cce8", t: "Chip" }] },
  { kind: "child", name: "ChpsCrnchB", first: true, clips: [chip("#e0d8a4")] },
  { kind: "child", name: "ChpsCrnB01", clips: [chip("#ccb0ec")] },
  { kind: "child", name: "ChpsCrnB02", clips: [chip("#dcb0de")] },
  { kind: "child", name: "ChpsCrnB03", clips: [chip("#dcacbc")] },
  { kind: "child", name: "ChpsCrnB04", clips: [chip("#e4aaa4")] },
  { kind: "child", name: "ChpsCrnB05", clips: [chip("#e4d0a4")] },
  { kind: "child", name: "ChpsCrnB06", clips: [chip("#cce4a8")] },
  { kind: "child", name: "ChpsCrnB07", clips: [chip("#b0e0a4")] },
  { kind: "child", name: "ChpsCrnB09", clips: [chip("#a8e4b8")] },
  { kind: "child", name: "ChpsCrnB10", clips: [chip("#ace8e4")] },
  { kind: "child", name: "ChpsCrnB11", clips: [chip("#a8d0fc")] },
  { kind: "fill" },
  { kind: "tall", name: "Prop3", theme: BLUE, bus: "A 16", out: "51tStr" },
  { kind: "slim", name: "Junk", theme: VIOLET, folder: true, bus: "1" },
  { kind: "tall", name: "Junk 1", theme: NAVY, bus: "A 13", out: "51tStr" },
  { kind: "tall", name: "Junk 2", theme: NAVY, bus: "A 5", out: "5.1t>", surround: true },
  { kind: "slim", name: "EditTrcks", theme: VIOLET, folder: true, bus: "n" },
  { kind: "slim", name: "Edit", theme: NAVY, bus: "1", clips: [{ x: 394, w: 14, c: "#8098b0", t: "K" }, { x: 418, w: 12, c: "#88a8d8" }] },
  { kind: "slim", name: "Edit 2", theme: NAVY, bus: "2", edit: true, clips: [{ x: 394, w: 18, c: "#8098c0", t: "Kn" }, { x: 411, w: 9, c: "#88a8d8" }, { x: 627, w: 28, c: "#80a8b0", t: "Chip" }] },
];

/* ---------- pieces ---------- */

const RecKeys = ({ h, solo }: { h: number; solo?: boolean }) => (
  <KeyStrip $h={h}>
    <Key $w={10} $kind="rec" aria-label="Record enable">
      <svg width="7" height="7" viewBox="0 0 7 7"><circle cx="3.500" cy="3.500" r="3" fill="#e6dcdc" /></svg>
    </Key>
    <Key $w={10}>I</Key>
    <Key $w={11} $kind={solo ? "solo" : undefined}>S</Key>
    <Key $w={12} $kind={solo ? undefined : "mute"}>M</Key>
  </KeyStrip>
);

const ChildKeys = () => (
  <KeyStrip $h={15}>
    <Key $w={13} aria-label="Active"><svg width="8" height="8" viewBox="0 0 8 8"><path d="M.5 .5H7.500V7.500H.5Z" fill="none" stroke="#eee" /><rect x="2" y="2" width="4" height="4" fill="#eee" /></svg></Key>
    <Key $w={12}>S</Key>
    <Key $w={13} $kind="off" aria-label="Promote"><svg width="8" height="9" viewBox="0 0 8 9"><path d="M4 0 8 4H5.500V9H2.500V4H0Z" fill="#98a4ac" /></svg></Key>
  </KeyStrip>
);

const Slots = ({ theme, rows }: { theme: Theme; rows: number }) => (
  <Inserts $c={theme.cell} $rows={rows}>
    {Array.from({ length: rows * 5 }, (_, i) => (
      <Slot key={i} $c={theme.slot} aria-label={`Insert ${i + 1}`}>
        {rows === 2 && i < 5 && <svg width="4" height="4" viewBox="0 0 4 4"><circle cx="2" cy="2" r="2" fill="#00203a99" /></svg>}
      </Slot>
    ))}
  </Inserts>
);

const FaderBtn = ({ w, h, label }: { w: number; h: number; label: string }) => (
  <Pair><Soft $w={w} $h={h}>{label}</Soft><Soft $w={11} $h={h} aria-label="Output window"><Fader /></Soft></Pair>
);

const Header = ({ t }: { t: TrackData }) => {
  const th = t.theme ?? BLUE;
  if (t.kind === "child" || t.kind === "fill") {
    const fill = t.kind === "fill";
    return (
      <Controls $pad={fill ? "0 0 1px" : "0"}>
        <EdgeTab $c={t.first ? th.tab : undefined} $h={t.first ? "8px" : undefined} $r="0 0 0 4px" />
        <Columns $c={th.bg} $child>
          <Indent $c={th.tab} $last={fill}>{fill && <PlayTri />}</Indent>
          <ChildPanel $c={th.panel} $thin={fill}>{!fill && <><TrackName $w={69}>{t.name}</TrackName><ChildKeys /></>}</ChildPanel>
          <Plain $c={th.cell} $edge={th.bg} />
        </Columns>
      </Controls>
    );
  }
  if (t.kind === "tall") {
    return (
      <Controls $pad="1px 0">
        <EdgeTab $c={th.tab} $r="6px 0 0 6px"><Chev /><PlayTri /></EdgeTab>
        <Columns $c={th.bg}>
          <TallName $c={th.panel}>
            <NameRow><TrackName $size={12}>{t.name}</TrackName><DropBtn aria-label="Playlists"><Tri d="down" c="#555" s={8} /></DropBtn></NameRow>
            <KeyRow><RecKeys h={16} /><Soft $w={31} $h={16}>wave</Soft><Soft $w={25} $h={16} $green>read</Soft></KeyRow>
          </TallName>
          <MeterCol><Meter /></MeterCol>
          <Comment $c={th.comment} aria-label={`${t.name} comments`} />
          <Slots theme={th} rows={2} />
          <IO $c={th.cell}>
            <IORow><Soft $w={36} $h={16} $flat>{t.bus}</Soft><FaderBtn w={30} h={16} label={t.out ?? ""} /></IORow>
            <IORow>
              <Vp $w={t.surround ? 60 : 76} $h={16} $gap={t.surround ? 4 : 7}><span>0.0</span><Bar /><Tri d="right" s={6} /><span>0</span><Tri d="left" s={6} /></Vp>
              {t.surround && <Vp $w={15} $h={16}><svg width="13" height="13" viewBox="0 0 13 13"><path d="M3.500 2V12M6.500 2V12M9.500 2V12M1 4.500H12M1 7.500H12M1 10.500H12" stroke="#2c4414" /><circle cx="6.500" cy="1.500" r="1.500" fill={LIME} /></svg></Vp>}
            </IORow>
          </IO>
        </Columns>
      </Controls>
    );
  }
  const slim = t.kind === "slim";
  return (
    <Controls $pad={slim ? "1px 0" : "1px 0 0"}>
      <EdgeTab $c={th.tab} $r={slim ? "6px 0 0 6px" : "6px 0 0 0"}><Chev /></EdgeTab>
      <Columns $c={th.bg}>
        <ParentName $c={th.panel}>
          <TrackName $size={12} $w={59} $edit={t.edit}>{t.name}</TrackName>
          <RecKeys h={slim ? 12 : 16} solo={t.solo} />
        </ParentName>
        <MeterCol><Meter /></MeterCol>
        <Comment $c={th.comment} aria-label={`${t.name} comments`} />
        <Slots theme={th} rows={1} />
        <IO $c={th.cell}>
          <IORow>
            <Soft $w={11} $h={slim ? 11 : 16} $flat={t.bus === "1" && t.folder}>{t.bus ?? "J"}</Soft>
            <FaderBtn w={12} h={slim ? 11 : 16} label="5" />
            <Vp $w={39} $h={slim ? 11 : 16}><span>v</span><Bar /><span>p</span></Vp>
          </IORow>
        </IO>
      </Columns>
    </Controls>
  );
};

const heights = { child: 23, fill: 16, parent: 23, tall: 43, slim: 16 };
const laneColor = (t: TrackData) =>
  t.folder ? "#aea8c4" : t.kind === "child" || t.kind === "fill" ? "#c4c4c4" : t.kind === "slim" ? "#bcbcbc" : "#b8b8b8";

const PanelTitle = ({ text }: { text: string }) => (
  <PanelHead><h2>{text}</h2><RoundButton aria-label={`${text} menu`}><Tri d="down" c="#333" s={10} /></RoundButton></PanelHead>
);

const ticks: [number, string][] = [
  [-7, "00:59:30:00"], [194, "01:00:00:00"], [395, "01:00:30:00"], [596, "01:01:00:00"], [797, "01:01:30:00"], [998, "01:02:00:00"], [1200, "01:02:30"],
];
const marks: [number, string][] = [[181, ""], [194, "FFOA"], [394, ""], [405, "Knife Cut Veggie"], [634, "Chips Crunchy Bite"]];
const editOptions = ["Zoom toggle", "Tab to transients", "Mirrored MIDI", "Automation follows edit", "Link timeline", "Link track", "Insertion follows playback", "Layered editing"];

export default function App() {
  return (
    <Window>
      <GlobalStyle />
      <TitleBar>
        <Lights>
          <Light $c="#fc5b57" $b="#dd4340" aria-label="Close"><svg width="4" height="4" viewBox="0 0 4 4"><circle cx="2" cy="2" r="2" fill="#5c0a08" /></svg></Light>
          <Light $c="#fdbe41" $b="#dfa030" aria-label="Minimise" />
          <Light $c="#34c84a" $b="#27aa35" aria-label="Zoom" />
        </Lights>
        <Title>
          <svg width="12" height="16" viewBox="0 0 12 16"><rect width="12" height="16" rx="1" fill="#8b8792" /><circle cx="6" cy="6" r="4.600" fill="#d8d4e0" stroke="#4a4654" /><path d="M3.500 8 6 3 8.500 8Z" fill="#6a5c88" /><path d="M2 13.500H10" stroke="#ddd" /></svg>
          Edit: Foley lazy susan 20191102(after)
        </Title>
      </TitleBar>

      <Toolbar>
        <Cluster $w={129} $pad="0 5px 0 7px" $align="center" $gap={0} $spread>
          <Notch />
          <Screen $w={110} $h={47}>
            <ModeGrid><Mode>SHUFFLE</Mode><Mode>SPOT</Mode><Mode $on>SLIP</Mode><Mode>GRID <Tri d="down" s={8} /></Mode></ModeGrid>
          </Screen>
          <Notch $bottom />
        </Cluster>

        <Cluster $w={105} $pad="11px 7px 0">
          <Strip>
            <Cell $w={13} $h={29} aria-label="Zoom out"><Tri d="left" s={10} c="#111" /></Cell>
            <Cell $w={31} $h={29} aria-label="Audio zoom"><WaveZoom /></Cell>
            <Cell $w={31} $h={29} aria-label="MIDI zoom"><MidiZoom /></Cell>
            <Cell $w={13} $h={29} aria-label="Zoom in"><Tri d="right" s={10} c="#111" /></Cell>
          </Strip>
          <Groove $w={87} />
          <Strip>{[1, 2, 3, 4, 5].map((n) => <Cell key={n} $w={n === 3 ? 16 : 18} $h={18}>{n}</Cell>)}</Strip>
        </Cluster>

        <Cluster $w={328} $pad="3px 0 0" $align="center">
          <Row $align="flex-end">
            <Tool $w={37} $h={32} aria-label="Zoomer"><Magnifier /></Tool>
            <SmartFrame>
              <Tool $w={38} $h={31} aria-label="Trim"><Trim /></Tool>
              <Tool $w={38} $h={31} $on aria-label="Selector"><Selector /></Tool>
              <Tool $w={38} $h={31} aria-label="Grabber"><Hand /></Tool>
            </SmartFrame>
            <Tool $w={37} $h={32} aria-label="Scrubber"><Speaker /></Tool>
            <Tool $w={37} $h={32} aria-label="Pencil"><Pencil /></Tool>
          </Row>
          <Groove $w={240} />
          <Row $gap={4}>
            {editOptions.map((n, i) => (
              <Tool key={n} $w={31} $h={20} $on={[1, 3, 4, 5].includes(i)} aria-label={n}><EditIcon k={i} /></Tool>
            ))}
          </Row>
        </Cluster>

        <Cluster $w={337} $pad="5px 0 0 9px">
          <Screen $w={315} $h={70}>
            <CounterTop>
              <MainCounter><span>01:01:05:15</span><Tri d="down" c="#b4c4a0" s={8} /></MainCounter>
              <Pairs><dt>Start</dt><dd>01:01:05:15</dd><dt>End</dt><dd>01:01:05:15</dd><dt>Length</dt><dd>00:00:00:00</dd></Pairs>
            </CounterTop>
            <CursorLine>
              <b>Cursor</b><Value $w={74}>00:59:41:15.27</Value><Bar />
              <svg width="16" height="12" viewBox="0 0 16 12" stroke="#e8e8e8"><path d="M0 6H16M2.500 1V11M3.500 3V9M4.500 2V10M6.500 1V11M7.500 3V9M8.500 4V8" /></svg>
              <Value $w={50}>-8388608</Value><Bar />
              <svg width="16" height="11" viewBox="0 0 16 11" fill="none" stroke={LIME}><path d="M.5 .5H15.500V10.500H.5ZM1 5.500H15M4.500 2.500V8.500M6.500 3.500V7.500M9.500 2.500V8.500M11.500 4V7" /></svg>
              <svg width="9" height="11" viewBox="0 0 9 11"><path d="M3 .5H8.500V10.500H.5V3Z" fill="#8a0c14" stroke="#d8202c" /></svg>
              <span>Dly</span>
              <svg width="12" height="12" viewBox="0 0 12 12"><circle cx="6" cy="6" r="2" fill={LIME} /><path d="M2 3.500A5 5 0 1 0 10 3.500M8 1 10.500 3.500" fill="none" stroke={LIME} strokeWidth="1.400" /></svg>
              <Row $gap={3}><Status>✱</Status><Status $on>S</Status><Status>M</Status></Row>
            </CursorLine>
          </Screen>
        </Cluster>

        <Cluster $w={166} $pad="0 8px 0 9px" $align="center" $gap={0} $spread>
          <Notch />
          <Screen $w={148} $h={47}>
            <GridRow><Badge $w={36} $on>Grid</Badge><span>00:00:00:01.00</span><Tri d="down" c="#b4c4a0" s={8} /></GridRow>
            <GridRow><b>Nudge</b><span>00:00:00:00.25</span><Tri d="down" c="#b4c4a0" s={8} /></GridRow>
          </Screen>
          <Notch $bottom />
        </Cluster>

        <Cluster $w={326} $pad="5px 0 0 11px">
          <Row $gap={7}>
            <Screen $w={288} $h={46}>
              <RollGrid>
                <Rolls>
                  {[["Pre-roll", "00:00:01:23"], ["Post-roll", "00:29:20:09"], ["Fade-in", "0:00.250"]].map(([a, b]) => (
                    <Row key={a}><Badge $w={60}>{a}</Badge><span>{b}</span></Row>
                  ))}
                </Rolls>
                <Pairs><dt>Start</dt><dd>01:01:05:15</dd><dt>End</dt><dd>01:01:05:15</dd><dt>Length</dt><dd>00:00:00:00</dd></Pairs>
              </RollGrid>
            </Screen>
            <Minis><Mini aria-label="Pre-roll link" /><Mini aria-label="Post-roll link" /></Minis>
          </Row>
          <Row $gap={10}>
            <Tool $w={31} $h={20} aria-label="Online"><Pie /></Tool>
            <Row $gap={4}>{["start", "rew", "fwd", "end"].map((k) => <Tool key={k} $w={31} $h={20} aria-label={k}><TransportIcon k={k} /></Tool>)}</Row>
            <Row $gap={4}>{["stop", "play", "rec"].map((k) => <Tool key={k} $w={31} $h={20} aria-label={k}><TransportIcon k={k} /></Tool>)}</Row>
          </Row>
        </Cluster>

        <Cluster $w={88} $pad="56px 0 0 10px">
          <Row $gap={4}><Tool $w={31} $h={20} aria-label="Sync"><Pie /></Tool><Tool $w={31} $h={20}>MTC</Tool></Row>
        </Cluster>

        <Cluster $pad="5px 3px 0 9px">
          <TopRow>
            <Screen $w={41} $h={71}><MeterFill /></Screen>
            <RoundButton aria-label="Toolbar menu"><Tri d="down" c="#333" s={10} /></RoundButton>
          </TopRow>
        </Cluster>
      </Toolbar>

      <Body>
        <Side>
          <Panel $basis={653}>
            <PanelTitle text="TRACKS" />
            <PanelBody>
              <List $rules={[27, 39, 54]}>
                {trackList.map(([n, c, ind], i) => (
                  <TrackItem key={n + i} $sel={n === "Edit2"}>
                    <Dot /><Pill $c={pillColor[c]} />
                    {ind ? <i /> : c === "f" ? <FilmIcon /> : <WaveIcon />}
                    <ItemName $indent={ind}>{n}</ItemName>
                  </TrackItem>
                ))}
              </List>
              <VTrack>
                <VThumb $grow={460} /><VSpace $grow={137} />
                <ScrollBtn $w={14} $h={17} aria-label="Scroll up"><Tri d="up" s={8} /></ScrollBtn>
                <ScrollBtn $w={14} $h={17} aria-label="Scroll down"><Tri d="down" s={8} /></ScrollBtn>
              </VTrack>
            </PanelBody>
          </Panel>
          <Panel $grow={0} $basis={355}>
            <PanelTitle text="GROUPS" />
            <PanelBody>
              <List $rules={[17, 29, 45]}>
                <GroupItem><svg width="6" height="6" viewBox="0 0 6 6"><circle cx="3" cy="3" r="2" fill="none" stroke="#333" /></svg><Pill $c="#4a20f0" /><span>!</span><ItemName $italic>&lt;ALL&gt;</ItemName></GroupItem>
                <GroupItem><i /><Pill $c="#1c4a5c" /><span>a</span><ItemName>Knife</ItemName></GroupItem>
              </List>
              <VTrack>
                <SortBtn aria-label="Sort groups"><span>a</span><span>z</span></SortBtn><VSpace $grow={1} />
                <ScrollBtn $w={14} $h={17} $tone="off" aria-label="Scroll up" /><ScrollBtn $w={14} $h={17} $tone="off" aria-label="Scroll down" />
              </VTrack>
            </PanelBody>
          </Panel>
        </Side>

        <Center>
          <Universe>
            <UniverseView>
              <MarkerStrip>{[148, 159, 318, 327, 510].map((x) => <MiniMark key={x} $x={x} />)}</MarkerStrip>
              <UniverseMap>
                <VisibleArea />
                <MiniClip $x={339} $y={1} $w={10} $h={18} $c="#648053" $t="#26450f" />
                <MiniClip $x={507} $y={27} $w={22} $h={5} $c="#5d97c0" $t="#1d6aa4" />
                <MapScroll><Dot /><Tri d="down" c="#333" s={7} /></MapScroll>
              </UniverseMap>
            </UniverseView>
            <TabCol>
              <Tab $on aria-label="Universe view"><svg width="13" height="14" viewBox="0 0 13 14" fill="none" stroke="#c8c8c8"><path d="M.5 .5H12.500V13.500H.5ZM2 3.500H8M9 3.500H11M2 5.500H5M6 5.500H11M2 7.500H9M2 9.500H5M6 9.500H11M2 11.500H8" /></svg></Tab>
              <Tab aria-label="MIDI editor"><svg width="13" height="13" viewBox="0 0 13 13" fill="none" stroke="#777"><path d="M.5 .5H12.500V12.500H.5ZM2 10.500H4.500L6 3H7L8.500 10.500H11" /></svg></Tab>
            </TabCol>
          </Universe>

          <Editor>
            <EditMain>
              <Ruler $kind="time">
                <RulerName>
                  <Row $gap={2}><svg width="15" height="10" viewBox="0 0 15 10"><rect width="15" height="10" fill="#1a1c1e" /><path d="M1 4H14M1 7H14" stroke="#747e8a" /></svg><Tri d="down" c="#111" s={8} /></Row>
                  <span>Timecode</span>
                </RulerName>
                <RulerLane>
                  <CursorMark />
                  {ticks.map(([x, l]) => <Tick key={x} $x={x}>{l}</Tick>)}
                  <Playhead $x={620}>
                    <svg width="24" height="17" viewBox="0 0 24 17"><path d="M1.500 14V2H8L1.500 8" fill="#fff" stroke="#111" /><path d="M10 .5H18V7H22L14 16 6 7H10Z" fill="#5c98dc" stroke="#101c30" strokeWidth="1.300" /><path d="M14 0V15" stroke="#101c30" /></svg>
                  </Playhead>
                </RulerLane>
              </Ruler>
              <Ruler $kind="marker">
                <RulerName $dim><span /><span>Markers</span><span>+</span></RulerName>
                <RulerLane>
                  <CursorMark />
                  {marks.map(([x, l]) => <MarkerFlag key={x} $x={x - 5}><Diamond />{l}</MarkerFlag>)}
                </RulerLane>
              </Ruler>
              <ColumnHeads>
                <HeadTools>
                  <Row $gap={2}>
                    <svg width="14" height="10" viewBox="0 0 14 10"><rect width="14" height="10" fill="#e8e8e8" /><path d="M5.500 1V9M8.500 1V9M11.500 1V9" stroke="#333" strokeWidth="1.400" /></svg>
                    <Tri d="down" s={8} />
                  </Row>
                  <Row $gap={4}><ClockIcon s={11} /><Tri d="down" s={8} /></Row>
                </HeadTools>
                <Head>COMMENTS</Head><Head>INSERTS A-E</Head><Head>I / O</Head><HeadLane /><HeadLane><CursorMark /></HeadLane>
              </ColumnHeads>
              <Tracks>
                <TrackStack>
                  {tracks.map((t, i) => (
                    <TrackRow key={i} $h={heights[t.kind]}>
                      <Header t={t} />
                      <Gutter>{t.kind === "tall" && <Scale />}</Gutter>
                      <Lane $c={laneColor(t)} $cap={t.folder}>
                        {t.clips?.map((c, j) => (
                          <ClipBox key={j} $x={c.x} $w={c.w} $c={c.c} $short={t.kind === "slim"}>{c.t && <ClipLabel>{c.t}</ClipLabel>}</ClipBox>
                        ))}
                      </Lane>
                    </TrackRow>
                  ))}
                  {marks.map(([x]) => <MarkerLine key={x} $x={x} $strong={x > 300} />)}
                </TrackStack>
              </Tracks>
            </EditMain>
            <VTrack>
              <PinBtn aria-label="Go to edit point"><svg width="9" height="11" viewBox="0 0 9 11" fill="#eee"><path d="M0 0H9V1.500H0ZM4.500 3 8.500 7H6V11H3V7H.5Z" /></svg></PinBtn>
              <Blank />
              <SortBtn $hot aria-label="Sort"><span>a</span><span>z</span></SortBtn>
              <ScrollBtn $w={14} $h={21} $tone="light" aria-label="Waveform zoom"><WaveIcon /></ScrollBtn>
              <ScrollBtn $w={14} $h={21} $tone="light" aria-label="MIDI zoom"><svg width="9" height="7" viewBox="0 0 9 7" fill="#222"><path d="M0 0H5V2H0ZM4 4H9V6H4Z" /></svg></ScrollBtn>
              <VSpace $grow={197} /><VThumb $grow={599} />
              <ScrollBtn $w={14} $h={17} aria-label="Scroll up"><Tri d="up" s={8} /></ScrollBtn>
              <ScrollBtn $w={14} $h={17} aria-label="Scroll down"><Tri d="down" s={8} /></ScrollBtn>
              <ScrollBtn $w={14} $h={15} $tone="light" aria-label="Shrink tracks"><Sign /></ScrollBtn>
              <ScrollBtn $w={14} $h={15} $tone="light" aria-label="Grow tracks"><Sign plus /></ScrollBtn>
            </VTrack>
          </Editor>

          <BottomBar>
            <BottomCell><svg width="11" height="9" viewBox="0 0 11 9" fill="#ccc"><path d="M0 0H1.500V9H0ZM3 4.500 7 .5V3H10V6H7V8.500Z" /></svg></BottomCell>
            <HBar><HThumb $grow={545} /><VSpace $grow={623} /></HBar>
            <Row>
              <ScrollBtn $w={17} $h={15} aria-label="Scroll left"><Tri d="left" s={8} /></ScrollBtn>
              <ScrollBtn $w={17} $h={15} aria-label="Scroll right"><Tri d="right" s={8} /></ScrollBtn>
              <ScrollBtn $w={15} $h={15} $tone="light" aria-label="Zoom out"><Sign /></ScrollBtn>
              <ScrollBtn $w={15} $h={15} $tone="light" aria-label="Zoom in"><Sign plus /></ScrollBtn>
              <EndCell><svg width="11" height="9" viewBox="0 0 11 9" fill="#ccc"><path d="M9.500 0H11V9H9.500ZM8 4.500 4 .5V3H0V6H4V8.500Z" /></svg></EndCell>
            </Row>
          </BottomBar>
        </Center>

        <Side>
          <Panel>
            <PanelTitle text="CLIPS" />
            <PanelBody>
              <List $rules={[12, 24, 40, 56]}>
                {clipList.map((raw, i) => {
                  const name = raw.replace(/^[*>]+/, "");
                  const film = i === VIDEO_CLIP;
                  return (
                    <ClipItem key={i}>
                      {film ? <i /> : <ClockIcon />}
                      <i />{film ? <FilmIcon /> : <WaveIcon />}
                      {raw.slice(0, 2).includes(">") ? <Tri d="right" c="#484848" s={8} /> : <i />}
                      <ItemName $bold={raw.startsWith("*")} $italic={name === "Slug"}>{name}</ItemName>
                    </ClipItem>
                  );
                })}
              </List>
              <VTrack>
                <SortBtn aria-label="Sort clips"><span>a</span><span>z</span></SortBtn><VSpace $grow={1} />
                <ScrollBtn $w={14} $h={17} $tone="off" aria-label="Scroll up" /><ScrollBtn $w={14} $h={17} $tone="off" aria-label="Scroll down" />
              </VTrack>
            </PanelBody>
            <ClipsFoot>
              <FootBar><HThumb $grow={29} /><VSpace $grow={46} /></FootBar>
              <ScrollBtn $w={17} $h={15} aria-label="Scroll left"><Tri d="left" s={8} /></ScrollBtn>
              <ScrollBtn $w={17} $h={15} aria-label="Scroll right"><Tri d="right" s={8} /></ScrollBtn>
            </ClipsFoot>
          </Panel>
        </Side>
      </Body>
    </Window>
  );
}
